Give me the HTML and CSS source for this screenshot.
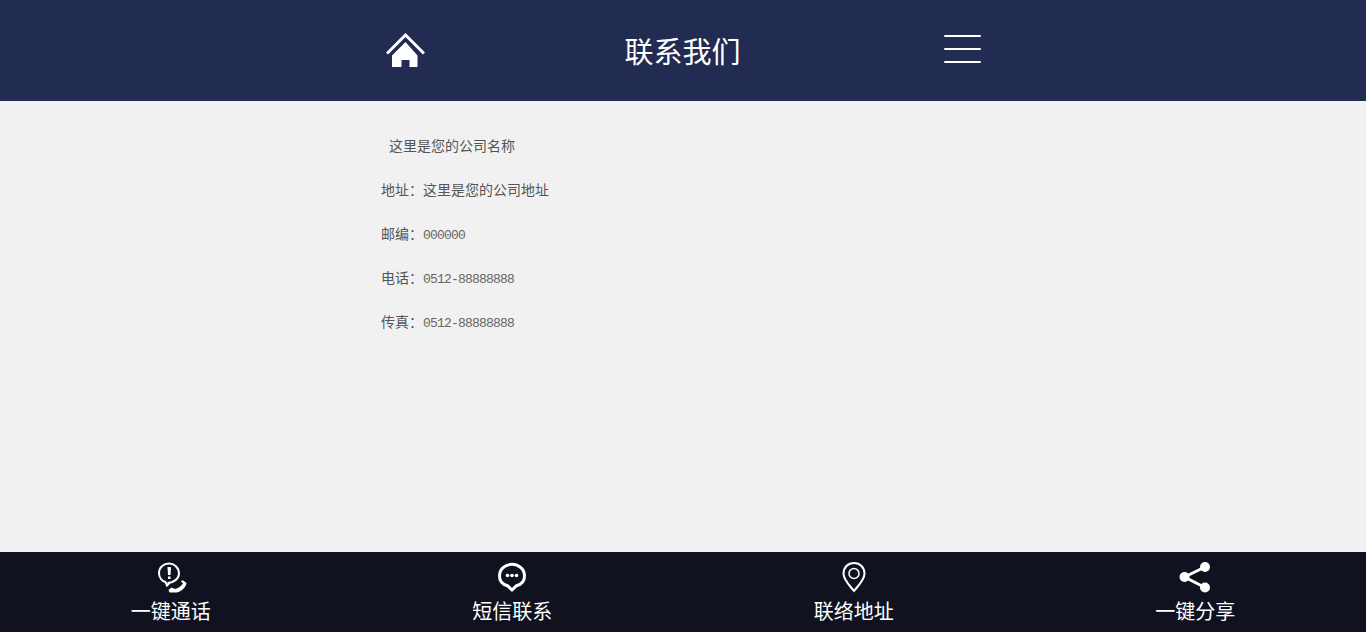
FILE: index.html
```html
<!DOCTYPE html>
<html lang="zh-CN">
<head>
<meta charset="utf-8">
<title>联系我们</title>
<link rel="stylesheet" href="styles.css">
</head>
<body>
<header class="top">
  <div class="top-inner">
    <a class="home" href="#" aria-label="首页">
      <svg width="39" height="35" viewBox="0 0 39 35"><path class="roof" d="M1 20.500 19.500 2 38 20.500"/><path class="fill" d="M19.500 9 6 22.500V34H15.500V27H23.500V34H31.500V22.500Z"/></svg>
    </a>
    <h1 class="title">联系我们</h1>
    <button class="menu" aria-label="菜单"><span></span><span></span><span></span></button>
  </div>
</header>
<main class="content">
  <p class="line first">这里是您的公司名称</p>
  <p class="line">地址<span class="colon">：</span>这里是您的公司地址</p>
  <p class="line">邮编<span class="colon">：</span><span class="num">000000</span></p>
  <p class="line">电话<span class="colon">：</span><span class="num">0512-88888888</span></p>
  <p class="line">传真<span class="colon">：</span><span class="num">0512-88888888</span></p>
</main>
<nav class="bottom">
  <a class="item" href="#">
    <svg class="icon" width="32" height="32" viewBox="0 0 32 32"><path class="line-s" d="M12.500 22C18.500 22 24 17.500 24 12.500C24 6.500 19 2.500 14 2.500C8.500 2.500 4 6.500 4 12C4 16.500 7 20 10.500 21L12 24.500L15 21.500"/><path class="fill" d="M12.500 6H16L15.500 14H13ZM13 15.500H15.500V18H13Z"/><path class="fill" d="M27.500 19 31.500 22C31 26.500 26 31 21 31.500L14.500 31.500 13.500 29 16.500 26.500 20 28C23 27.500 26.500 25 28 22.500L26 20.500Z"/></svg>
    <span class="label">一键通话</span>
  </a>
  <a class="item" href="#">
    <svg class="icon" width="32" height="32" viewBox="0 0 32 32"><path class="line-b" d="M16 29 11.500 24.700C6.500 23.500 3.500 20 3.500 15C3.500 8.500 9 3.300 16 3.300C23 3.300 28.500 8.500 28.500 15C28.500 20 25.500 23.500 20.500 24.700Z"/><circle class="fill" cx="11.500" cy="14.500" r="1.800"/><circle class="fill" cx="16" cy="14.500" r="1.800"/><circle class="fill" cx="20.500" cy="14.500" r="1.800"/></svg>
    <span class="label">短信联系</span>
  </a>
  <a class="item" href="#">
    <svg class="icon" width="32" height="32" viewBox="0 0 32 32"><path class="line-m" d="M16 30C12 25 5.500 19 5.500 12.500C5.500 6.500 10 2 16 2C22 2 26.500 6.500 26.500 12.500C26.500 19 20 25 16 30Z"/><circle class="line-t" cx="16" cy="12.500" r="5"/></svg>
    <span class="label">联络地址</span>
  </a>
  <a class="item" href="#">
    <svg class="icon" width="32" height="32" viewBox="0 0 32 32"><path class="line-b" d="M26 6 5.500 16 26 26.500"/><circle class="fill" cx="26" cy="6" r="5"/><circle class="fill" cx="5.500" cy="16" r="5"/><circle class="fill" cx="26" cy="26.500" r="5"/></svg>
    <span class="label">一键分享</span>
  </a>
</nav>
</body>
</html>
```
FILE: styles.css
```css
* { box-sizing: border-box; }
html, body { height: 100%; }
body {
  margin: 0;
  display: flex;
  flex-direction: column;
  background: #f1f1f1;
  font-family: "Noto Sans CJK SC", "Liberation Sans", sans-serif;
  overflow: hidden;
}
.top { height: 101px; background: #222c52; flex: none; }
.top-inner {
  width: 600px;
  height: 100%;
  margin: 0 auto;
  padding: 0 2px 0 3px;
  display: flex;
  justify-content: space-between;
  align-items: flex-start;
}
.home { display: block; margin-top: 33px; height: 35px; }
.home svg, .icon { display: block; }
.title {
  margin: 30px 0 0 -4px;
  font-size: 29px;
  line-height: 40px;
  font-weight: 400;
  color: #fff;
}
.menu {
  margin: 35px 0 0;
  padding: 0;
  width: 37px;
  border: 0;
  background: none;
  display: flex;
  flex-direction: column;
  gap: 11px;
}
.menu span { display: block; height: 2px; background: #fff; border-radius: 1px; }
.fill { fill: #fff; }
.roof { fill: none; stroke: #fff; stroke-width: 3; }
.line-s, .line-b, .line-m, .line-t { fill: none; stroke: #fff; }
.line-s { stroke-width: 2; }
.line-b { stroke-width: 3; }
.line-m { stroke-width: 2; }
.line-t { stroke-width: 1.5; }
.content {
  flex: 1;
  width: 600px;
  margin: 0 auto;
  padding-top: 22px;
  color: #555;
  font-size: 14px;
  line-height: 44px;
}
.line { margin: 0 0 0 -2px; height: 44px; }
.first { padding-left: 8px; }
.colon { font-family: "Noto Sans CJK TC", sans-serif; }
.num { font-family: "Liberation Mono", monospace; font-size: 13px; letter-spacing: -0.8px; color: #666; }
.bottom {
  height: 80px;
  flex: none;
  background: #10131f;
  display: grid;
  grid-template-columns: repeat(4, 1fr);
}
.item {
  display: flex;
  flex-direction: column;
  align-items: center;
  padding-top: 9px;
  text-decoration: none;
  color: #fff;
}
.label { font-size: 20px; line-height: 30px; margin-top: 3px; white-space: nowrap; }
```
